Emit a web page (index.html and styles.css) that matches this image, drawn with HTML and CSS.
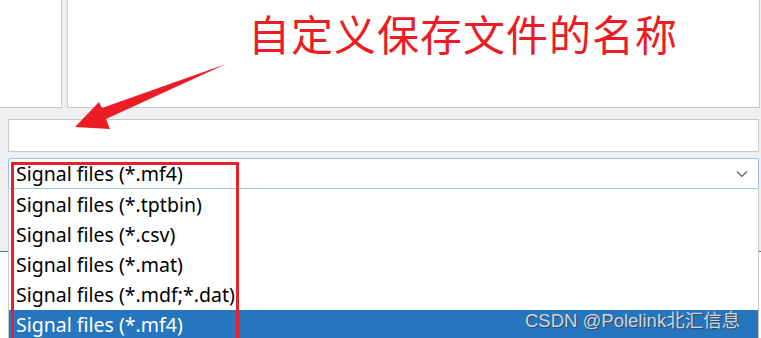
FILE: index.html
```html
<!DOCTYPE html>
<html lang="zh">
<head>
<meta charset="utf-8">
<title>Save dialog</title>
<link rel="stylesheet" href="styles.css">
</head>
<body>
<div class="page">
  <div class="panels">
    <div class="panel panel-left"></div>
    <div class="panel panel-right"></div>
  </div>
  <div class="name-input"></div>
  <div class="combo">
    <span class="combo-text">Signal files (*.mf4)</span>
    <svg class="chev" width="12" height="8" viewBox="0 0 12 8"><path d="M1 1.5 L6 6.5 L11 1.5" fill="none" stroke="#606060" stroke-width="1.2"/></svg>
  </div>
  <div class="under-gray"></div>
  <div class="under-line"></div>
  <div class="under-white"></div>

  <ul class="dropdown">
    <li class="opt">Signal files (*.tptbin)</li>
    <li class="opt">Signal files (*.csv)</li>
    <li class="opt">Signal files (*.mat)</li>
    <li class="opt">Signal files (*.mdf;*.dat)</li>
    <li class="opt selected">Signal files (*.mf4)</li>
  </ul>

  <div class="note">自定义保存文件的名称</div>
  <svg class="arrow" width="240" height="140" viewBox="0 0 240 140">
    <path d="M226 64 L102 108 L99 102 L75 127 L110 129 L106 119 Z" fill="#ec1c24"/>
  </svg>
  <div class="red-box"></div>
  <div class="watermark">CSDN @Polelink北汇信息</div>
</div>
</body>
</html>
```
FILE: styles.css
```css
html, body {
  margin: 0;
  padding: 0;
}
body {
  background: #f0f0f0;
  font-family: "Noto Sans", "Open Sans", "Noto Sans CJK SC", sans-serif;
  overflow: hidden;
}
.page {
  position: relative;
  width: 761px;
  height: 338px;
  overflow: hidden;
}
.panels {
  display: flex;
  gap: 5px;
  height: 108px;
}
.panel {
  background: #fff;
  border-bottom: 1px solid #c9c9c9;
  box-sizing: border-box;
}
.panel-left {
  width: 62px;
  border-right: 1px solid #c9c9c9;
}
.panel-right {
  width: 693px;
  border-left: 1px solid #c9c9c9;
  border-right: 1px solid #c9c9c9;
}
.name-input {
  margin: 11px 0 0 8px;
  width: 751px;
  height: 33px;
  box-sizing: border-box;
  background: #fff;
  border: 1px solid #c8c8c8;
}
.combo {
  margin: 6px 0 0 8px;
  width: 751px;
  height: 31px;
  box-sizing: border-box;
  background: #fff;
  border: 1px solid #9cc0e6;
  border-radius: 2px;
  display: flex;
  align-items: center;
  justify-content: space-between;
  padding: 0 10px 0 7px;
  font-size: 19.5px;
  color: #000;
}
.combo-text {
  line-height: 28px;
}
.under-gray {
  height: 62px;
}
.under-line {
  height: 1px;
  background: #2a78c8;
}
.under-white {
  height: 100px;
  background: #fff;
}
.dropdown {
  position: absolute;
  left: 8px;
  top: 189px;
  width: 751px;
  height: 160px;
  margin: 0;
  padding: 1px 0 0 0;
  box-sizing: border-box;
  list-style: none;
  background: #fff;
  border-left: 1px solid #c8c8c8;
  border-right: 1px solid #c8c8c8;
}
.opt {
  height: 30px;
  line-height: 30px;
  padding-left: 7px;
  font-size: 19.5px;
  color: #000;
}
.opt.selected {
  background: #2675bf;
  color: #fff;
}
.note {
  position: absolute;
  left: 248px;
  top: 8px;
  font-family: "Noto Sans CJK SC", sans-serif;
  font-size: 42px;
  line-height: 50px;
  color: #ec1c24;
  letter-spacing: 1px;
}
.arrow {
  position: absolute;
  left: 0;
  top: 0;
}
.red-box {
  position: absolute;
  left: 11px;
  top: 162px;
  width: 228px;
  height: 190px;
  box-sizing: border-box;
  border: 3px solid #e8202a;
}
.watermark {
  position: absolute;
  left: 525px;
  top: 306px;
  font-family: "Liberation Sans", "Noto Sans CJK SC", sans-serif;
  font-size: 18.5px;
  color: #c9d6e4;
  text-shadow: 1px 1px 1px #3a4552;
}
```
